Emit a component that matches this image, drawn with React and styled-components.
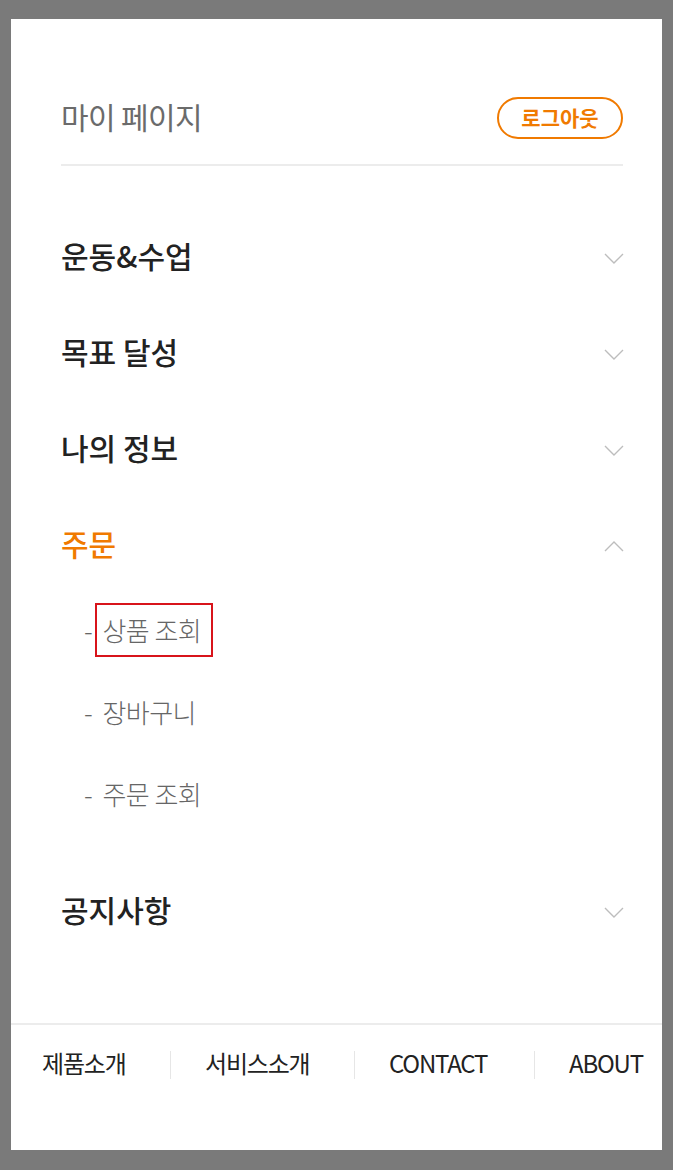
import styled, { createGlobalStyle } from 'styled-components';

const GlobalStyle = createGlobalStyle`
  html, body {
    margin: 0;
    padding: 0;
    background: #7a7a7a;
  }
  body {
    font-family: "Noto Sans CJK KR", "Noto Sans", sans-serif;
    -webkit-font-smoothing: antialiased;
  }
  * {
    box-sizing: border-box;
  }
`;

const menus = [
  { title: '운동&수업' },
  { title: '목표 달성' },
  { title: '나의 정보' },
  {
    title: '주문',
    open: true,
    children: [
      { label: '상품 조회', marked: true },
      { label: '장바구니' },
      { label: '주문 조회' },
    ],
  },
  { title: '공지사항' },
];

const footerLinks = ['제품소개', '서비스소개', 'CONTACT', 'ABOUT'];

const Chevron = ({ up }) => (
  <StyledChevron width="20" height="11" viewBox="0 0 20 11" $up={up}>
    <polyline points="1,1 10,10 19,1" fill="none" stroke="#bdbdbd" strokeWidth="1.4" />
  </StyledChevron>
);

const App = () => {
  return (
    <>
      <GlobalStyle />
      <StyledPanel>
        <StyledContent>
          <StyledHeader>
            <StyledPageTitle>마이 페이지</StyledPageTitle>
            <StyledLogout type="button">로그아웃</StyledLogout>
          </StyledHeader>
          <StyledDivider />

          <StyledMenuList>
            {menus.map((menu) => (
              <li key={menu.title}>
                <StyledMenuRow>
                  <StyledMenuTitle $active={menu.open}>{menu.title}</StyledMenuTitle>
                  <Chevron up={menu.open} />
                </StyledMenuRow>
                {menu.open && (
                  <StyledSubList>
                    {menu.children.map((child) => (
                      <StyledSubItem key={child.label}>
                        -{' '}
                        <StyledSubLabel $marked={child.marked}>{child.label}</StyledSubLabel>
                      </StyledSubItem>
                    ))}
                  </StyledSubList>
                )}
              </li>
            ))}
          </StyledMenuList>
        </StyledContent>

        <StyledFooter>
          {footerLinks.map((link) => (
            <StyledFooterLink key={link}>{link}</StyledFooterLink>
          ))}
        </StyledFooter>
      </StyledPanel>
    </>
  );
};

const StyledPanel = styled.div`
  display: flex;
  flex-direction: column;
  height: 1131px;
  margin: 19px 11px 20px;
  background: #fff;
`;

const StyledContent = styled.div`
  padding: 78px 39px 0 50px;
`;

const StyledHeader = styled.div`
  display: flex;
  align-items: center;
  justify-content: space-between;
  height: 42px;
`;

const StyledPageTitle = styled.h1`
  margin: 0;
  padding-bottom: 4px;
  font-size: 30px;
  font-weight: 400;
  color: #6b6b6b;
  letter-spacing: -0.02em;
`;

const StyledLogout = styled.button`
  width: 126px;
  height: 42px;
  padding: 0 0 2px;
  border: 2px solid #f07a00;
  border-radius: 21px;
  background: #fff;
  font-family: inherit;
  font-size: 21px;
  font-weight: 700;
  color: #f07a00;
  letter-spacing: 0;
  cursor: pointer;
`;

const StyledDivider = styled.hr`
  margin: 25px 0 0;
  height: 2px;
  border: 0;
  background: #ececec;
`;

const StyledMenuList = styled.ul`
  list-style: none;
  margin: 44px 0 0;
  padding: 0;
`;

const StyledMenuRow = styled.div`
  display: flex;
  align-items: center;
  justify-content: space-between;
  height: 96px;
`;

const StyledMenuTitle = styled.span`
  padding-bottom: 7px;
  font-size: 30px;
  font-weight: 500;
  letter-spacing: 0;
  color: ${({ $active }) => ($active ? '#f07a00' : '#222')};
`;

const StyledChevron = styled.svg`
  display: block;
  margin-right: -1px;
  transform: ${({ $up }) => ($up ? 'rotate(180deg)' : 'none')};
`;

const StyledSubList = styled.ul`
  list-style: none;
  margin: -3px 0 0;
  padding: 0 0 27px 23px;
`;

const StyledSubItem = styled.li`
  display: flex;
  align-items: center;
  gap: 5px;
  height: 82px;
  padding-bottom: 6px;
  font-size: 26px;
  font-weight: 300;
  color: #666;
  letter-spacing: -0.02em;
  white-space: pre;
`;

const StyledSubLabel = styled.span`
  position: relative;

  &::after {
    content: '';
    display: ${({ $marked }) => ($marked ? 'block' : 'none')};
    position: absolute;
    top: -8px;
    bottom: -9px;
    left: -7px;
    right: -12px;
    border: 2px solid #d8141b;
  }
`;

const StyledFooter = styled.nav`
  display: grid;
  grid-template-columns: 159px 184px 180px 128px;
  align-items: start;
  height: 127px;
  margin-top: auto;
  padding-top: 26px;
  border-top: 2px solid #ececec;
`;

const StyledFooterLink = styled.a`
  height: 28px;
  padding-left: 34px;
  border-left: 1px solid #e6e6e6;
  font-size: 24px;
  line-height: 23px;
  color: #222;
  letter-spacing: -0.05em;
  white-space: nowrap;

  &:first-child {
    padding-left: 31px;
    border-left: 0;
  }
`;

export default App;
